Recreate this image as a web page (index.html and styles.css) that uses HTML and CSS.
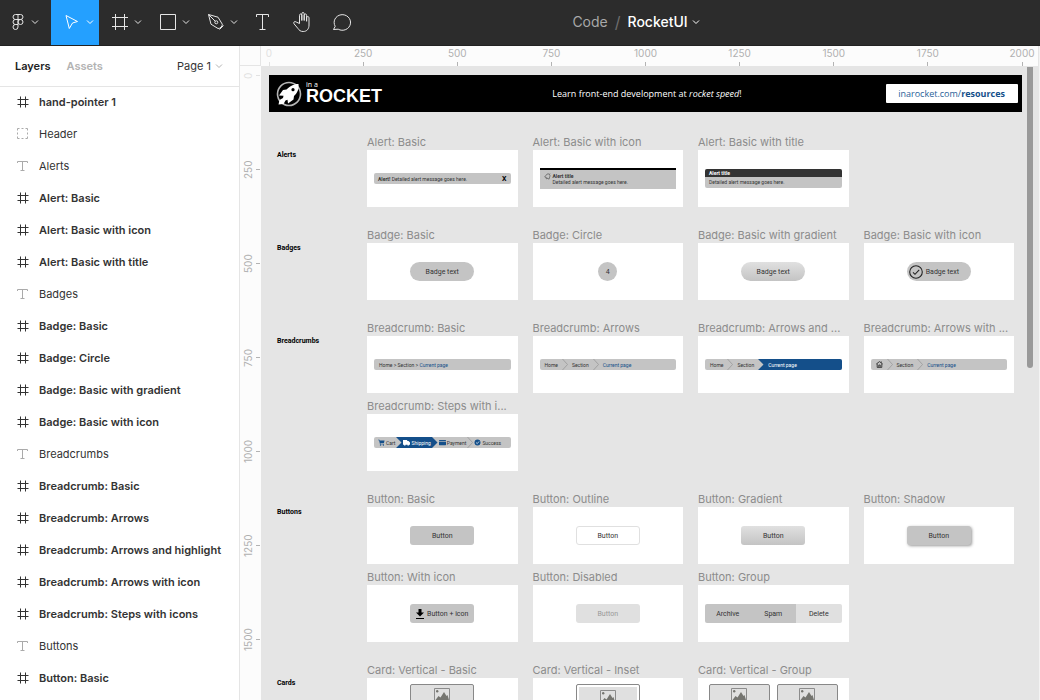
FILE: index.html
```html
<!DOCTYPE html>
<html lang="en">
<head>
<meta charset="utf-8">
<title>RocketUI</title>
<link rel="stylesheet" href="styles.css">
</head>
<body>
<svg class="sprite" aria-hidden="true">
  <symbol id="chev" viewBox="0 0 8 8"><path d="M1 2.5l3 3 3-3" fill="none" stroke="currentColor"/></symbol>
  <symbol id="hash" viewBox="0 0 12 12"><path d="M3.5.5v11M8.5.5v11M.5 3.5h11M.5 8.5h11" fill="none" stroke="currentColor"/></symbol>
  <symbol id="tee" viewBox="0 0 12 12"><path d="M.5 3V1.5h10V3M5.5 1.5v9M3.5 10.5h4" fill="none" stroke="currentColor"/></symbol>
  <symbol id="group" viewBox="0 0 12 12"><path d="M.5 2.500V.5h2M4.500.5h2M8.500.5h2v2M10.500 4.500v2M10.500 8.500v2h-2M6.500 10.500h-2M2.500 10.500h-2v-2M.5 6.500v-2" fill="none" stroke="currentColor"/></symbol>
  <symbol id="sep" viewBox="0 0 6 11"><path d="M.5 0l5 5.500-5 5.500" fill="none" stroke="#999" stroke-width=".8"/></symbol>
  <symbol id="notch" viewBox="0 0 6 11"><path d="M0 0h6v11H0l5.500-5.500z" fill="#144f8a"/></symbol>
  <symbol id="point" viewBox="0 0 6 11"><path d="M0 0l5.500 5.500L0 11z" fill="#144f8a"/></symbol>
  <symbol id="photo" viewBox="0 0 16 14"><path d="M.5.5h15v13H.5z" fill="none" stroke="#8c8c8c"/><circle cx="3.200" cy="3.200" r="1.200" fill="#757570"/><path d="M1.500 12l3-4 2 1.500 3.500-5.500 2.500 4 1-1 1.500 5z" fill="#757570"/></symbol>
</svg>

<header class="toolbar">
  <nav class="tools" aria-label="Tools">
    <button class="tool tool-menu" aria-label="Menu"><svg class="ico" viewBox="0 0 24 24"><path d="M12 4.500H9.500a2.500 2.500 0 0 0 0 5H12zM12 4.500h2.500a2.500 2.500 0 0 1 0 5H12M12 9.500H9.500a2.500 2.500 0 0 0 0 5H12zM12 14.500H9.500A2.500 2.500 0 1 0 12 17zM17 12a2.500 2.500 0 1 1-5 0 2.500 2.500 0 0 1 5 0z"/></svg><svg class="chev"><use href="#chev"/></svg></button>
    <button class="tool active" aria-label="Move"><svg class="ico" viewBox="0 0 24 24"><path d="M6 5.500l11.500 6-5 1.500-3.200 5.500z"/></svg><svg class="chev"><use href="#chev"/></svg></button>
    <button class="tool" aria-label="Frame"><svg class="ico" viewBox="0 0 24 24"><path d="M7.500 4v16M16.500 4v16M4 7.500h16M4 16.500h16"/></svg><svg class="chev"><use href="#chev"/></svg></button>
    <button class="tool" aria-label="Shape"><svg class="ico" viewBox="0 0 24 24"><path d="M4.500 4.500h15v15h-15z"/></svg><svg class="chev"><use href="#chev"/></svg></button>
    <button class="tool" aria-label="Pen"><svg class="ico" viewBox="0 0 24 24"><path d="M4.500 4.500l9.500 2.700 4.300 7-.3 1.800-2.200 2.200-1.800.3-7-4.300zM4.500 4.500l6.800 6.800M19.500 15.500l-4 4"/><circle cx="12.300" cy="12.300" r="1.500"/></svg><svg class="chev"><use href="#chev"/></svg></button>
    <button class="tool tool-single" aria-label="Text"><svg class="ico" viewBox="0 0 24 24"><path d="M5.500 7V4.500h12V7M11.500 4.500v15M8.500 19.500h6"/></svg></button>
    <button class="tool tool-single" aria-label="Hand"><svg class="ico" viewBox="0 0 24 24"><path d="M8.500 13.500V5.300c0-1.800 2.300-1.800 2.300 0v5.200-6.700c0-1.800 2.400-1.800 2.400 0v6.700-5.200c0-1.800 2.400-1.800 2.400 0v6-3.500c0-1.700 2.400-1.700 2.400 0V15c0 3.800-2 6.500-5.800 6.500-2.800 0-4-1.200-5.400-3.200L3 13.800c-1-1.600.8-3 2.200-1.800z"/></svg></button>
    <button class="tool tool-single" aria-label="Comment"><svg class="ico" viewBox="0 0 24 24"><path d="M2.500 19.500l1.700-3.200A8.200 7.800 0 1 1 7.200 19.200z"/></svg></button>
  </nav>
  <div class="title"><span class="project">Code</span><span class="slash">/</span><button class="file">RocketUI<svg class="chev"><use href="#chev"/></svg></button></div>
</header>

<div class="workspace">
  <aside class="sidebar">
    <div class="tabs">
      <button class="tab current">Layers</button>
      <button class="tab">Assets</button>
      <button class="page">Page 1<svg class="chev"><use href="#chev"/></svg></button>
    </div>
    <ul class="layers">
      <li class="frame"><svg><use href="#hash"/></svg>hand-pointer 1</li>
      <li><svg><use href="#group"/></svg>Header</li>
      <li><svg><use href="#tee"/></svg>Alerts</li>
      <li class="frame"><svg><use href="#hash"/></svg>Alert: Basic</li>
      <li class="frame"><svg><use href="#hash"/></svg>Alert: Basic with icon</li>
      <li class="frame"><svg><use href="#hash"/></svg>Alert: Basic with title</li>
      <li><svg><use href="#tee"/></svg>Badges</li>
      <li class="frame"><svg><use href="#hash"/></svg>Badge: Basic</li>
      <li class="frame"><svg><use href="#hash"/></svg>Badge: Circle</li>
      <li class="frame"><svg><use href="#hash"/></svg>Badge: Basic with gradient</li>
      <li class="frame"><svg><use href="#hash"/></svg>Badge: Basic with icon</li>
      <li><svg><use href="#tee"/></svg>Breadcrumbs</li>
      <li class="frame"><svg><use href="#hash"/></svg>Breadcrumb: Basic</li>
      <li class="frame"><svg><use href="#hash"/></svg>Breadcrumb: Arrows</li>
      <li class="frame"><svg><use href="#hash"/></svg>Breadcrumb: Arrows and highlight</li>
      <li class="frame"><svg><use href="#hash"/></svg>Breadcrumb: Arrows with icon</li>
      <li class="frame"><svg><use href="#hash"/></svg>Breadcrumb: Steps with icons</li>
      <li><svg><use href="#tee"/></svg>Buttons</li>
      <li class="frame"><svg><use href="#hash"/></svg>Button: Basic</li>
    </ul>
  </aside>

  <main class="canvas">
    <div class="corner"></div>
    <div class="ruler-x"><span class="faint">0</span><span>250</span><span>500</span><span>750</span><span>1000</span><span>1250</span><span>1500</span><span>1750</span><span>2000</span></div>
    <div class="ruler-y"><span class="faint">0</span><span>250</span><span>500</span><span>750</span><span>1000</span><span>1250</span><span>1500</span></div>

    <div class="scene">
      <div class="banner">
        <div class="logo">
          <svg class="rocket" viewBox="0 0 26 26"><circle cx="13" cy="13" r="11.500" fill="none" stroke="#b5b5b5" stroke-width="1.600"/><path d="M22.500 3C17 3 13.500 5.500 10.500 8.500L7 9l-4 5.500 4.500.3L7 17l-3.500 2L2.500 23.500l5-.5 2-3.500 2-.8.500 3.800 5.500-4 .5-3.500C21.500 11.500 23 8.500 22.500 3z" fill="#fff"/><circle cx="17" cy="8.700" r="1.600" fill="#000"/></svg>
          <div class="wordmark"><small>in a</small><strong>ROCKET</strong></div>
        </div>
        <p class="slogan">Learn front-end development at <em>rocket speed</em>!</p>
        <a class="resources" href="#resources">inarocket.com/<b>resources</b></a>
      </div>

      <section>
        <h2>Alerts</h2>
        <div class="frames">
          <figure><figcaption>Alert: Basic</figcaption><div class="art"><div class="bar alert"><span><b>Alert!</b> Detailed alert message goes here.</span><button class="close">X</button></div></div></figure>
          <figure><figcaption>Alert: Basic with icon</figcaption><div class="art"><div class="alert-icon"><svg viewBox="0 0 8 8"><path d="M.8 4.500L3.500 1.200c2-1 4 .8 3.200 2.600L5.800 7zM2.500 5.500c-.3 1 .6 1.500 1.300.8M6 1.500l.8-.8" fill="none" stroke="#333" stroke-width=".6"/></svg><p><b>Alert title</b><br>Detailed alert message goes here.</p></div></div></figure>
          <figure><figcaption>Alert: Basic with title</figcaption><div class="art"><div class="alert-title"><b>Alert title</b><p>Detailed alert message goes here.</p></div></div></figure>
        </div>
      </section>

      <section>
        <h2>Badges</h2>
        <div class="frames">
          <figure><figcaption>Badge: Basic</figcaption><div class="art"><span class="pill badge">Badge text</span></div></figure>
          <figure><figcaption>Badge: Circle</figcaption><div class="art"><span class="badge round">4</span></div></figure>
          <figure><figcaption>Badge: Basic with gradient</figcaption><div class="art"><span class="pill badge gradient">Badge text</span></div></figure>
          <figure><figcaption>Badge: Basic with icon</figcaption><div class="art"><span class="pill badge with-icon"><svg viewBox="0 0 14 14"><circle cx="7" cy="7" r="6.300" fill="none" stroke="#222" stroke-width="1.100"/><path d="M4 7.300l2 2 4.200-4.500" fill="none" stroke="#222" stroke-width="1.100"/></svg>Badge text</span></div></figure>
        </div>
      </section>

      <section>
        <h2>Breadcrumbs</h2>
        <div class="frames">
          <figure><figcaption>Breadcrumb: Basic</figcaption><div class="art"><nav class="bar crumbs"><span><a href="#h">Home</a> &gt; <a href="#s">Section</a> &gt; <a class="here" href="#c">Current page</a></span></nav></div></figure>
          <figure><figcaption>Breadcrumb: Arrows</figcaption><div class="art"><nav class="bar crumbs arrows"><a href="#h">Home</a><svg class="sep"><use href="#sep"/></svg><a href="#s">Section</a><svg class="sep"><use href="#sep"/></svg><a class="here" href="#c">Current page</a></nav></div></figure>
          <figure><figcaption>Breadcrumb: Arrows and ...</figcaption><div class="art"><nav class="bar crumbs arrows"><a href="#h">Home</a><svg class="sep"><use href="#sep"/></svg><a href="#s">Section</a><svg class="sep notch"><use href="#notch"/></svg><a class="lit" href="#c">Current page</a></nav></div></figure>
          <figure><figcaption>Breadcrumb: Arrows with ...</figcaption><div class="art"><nav class="bar crumbs arrows"><a href="#h" aria-label="Home"><svg class="house" viewBox="0 0 7 7"><path d="M.3 3L3.500.6 6.700 3M1.200 2.600v3.800h4.600V2.600M2.800 6V4h1.400v2M5.300.5v1.200" fill="none" stroke="#222" stroke-width=".8"/></svg></a><svg class="sep"><use href="#sep"/></svg><a href="#s">Section</a><svg class="sep"><use href="#sep"/></svg><a class="here" href="#c">Current page</a></nav></div></figure>
          <figure><figcaption>Breadcrumb: Steps with i...</figcaption><div class="art"><nav class="bar steps">
            <a href="#cart"><svg viewBox="0 0 8 8"><path d="M0 .8h1.700l.3 1h5.500L6.800 4.700H2.700l.2.700h3.800v.6H2.300L1.200 1.500H0z" fill="#144f8a"/><circle cx="2.900" cy="6.800" r=".8" fill="#144f8a"/><circle cx="6.200" cy="6.800" r=".8" fill="#144f8a"/></svg>Cart</a><svg class="sep"><use href="#notch"/></svg><a class="lit" href="#ship"><svg viewBox="0 0 8 8"><path d="M0 1h4.800v1.300h1.500L8 4v2.500H0z" fill="#fff"/><circle cx="2" cy="6.500" r="1" fill="#fff"/><circle cx="6" cy="6.500" r="1" fill="#fff"/></svg>Shipping</a><svg class="sep"><use href="#point"/></svg><a href="#pay"><svg viewBox="0 0 8 8"><rect y="1" width="8" height="6" rx=".6" fill="#144f8a"/><path d="M0 2.800h8" stroke="#c4c4c4" stroke-width=".8"/></svg>Payment</a><svg class="sep"><use href="#sep"/></svg><a href="#done"><svg viewBox="0 0 8 8"><circle cx="4" cy="4" r="3.400" fill="#144f8a"/><path d="M2.400 4l1.300 1.300 2.100-2.500" fill="none" stroke="#fff" stroke-width=".8"/></svg>Success</a>
          </nav></div></figure>
        </div>
      </section>

      <section>
        <h2>Buttons</h2>
        <div class="frames">
          <figure><figcaption>Button: Basic</figcaption><div class="art"><button class="pill btn">Button</button></div></figure>
          <figure><figcaption>Button: Outline</figcaption><div class="art"><button class="pill btn outline">Button</button></div></figure>
          <figure><figcaption>Button: Gradient</figcaption><div class="art"><button class="pill btn gradient">Button</button></div></figure>
          <figure><figcaption>Button: Shadow</figcaption><div class="art"><button class="pill btn shadow">Button</button></div></figure>
          <figure><figcaption>Button: With icon</figcaption><div class="art"><button class="pill btn download"><svg viewBox="0 0 8 10"><path d="M2.500 0h3v3.500H8L4 7.500 0 3.500h2.500zM0 9h8v1H0z" fill="#000"/></svg>Button + icon</button></div></figure>
          <figure><figcaption>Button: Disabled</figcaption><div class="art"><button class="pill btn" disabled>Button</button></div></figure>
          <figure><figcaption>Button: Group</figcaption><div class="art"><div class="btn-group"><button>Archive</button><button>Spam</button><button class="pale">Delete</button></div></div></figure>
        </div>
      </section>

      <section>
        <h2>Cards</h2>
        <div class="frames">
          <figure><figcaption>Card: Vertical - Basic</figcaption><div class="art cards"><div class="card"><svg><use href="#photo"/></svg></div></div></figure>
          <figure><figcaption>Card: Vertical - Inset</figcaption><div class="art cards"><div class="card inset"><svg><use href="#photo"/></svg></div></div></figure>
          <figure><figcaption>Card: Vertical - Group</figcaption><div class="art cards"><div class="card"><svg><use href="#photo"/></svg></div><div class="card"><svg><use href="#photo"/></svg></div></div></figure>
        </div>
      </section>
      <div class="thumb"></div>
    </div>
  </main>
  <aside class="inspector"></aside>
</div>
</body>
</html>
```

FILE: styles.css
```css
* { box-sizing: border-box; }
body {
  margin: 0;
  height: 100vh;
  display: flex;
  flex-direction: column;
  overflow: hidden;
  font-family: Inter, "Liberation Sans", sans-serif;
  font-size: 11px;
  color: #333;
  background: #fff;
}
button { border: 0; padding: 0; background: none; font: inherit; color: inherit; }
a { color: inherit; text-decoration: none; }
p, h2, figure, ul { margin: 0; padding: 0; }
.sprite { position: absolute; width: 0; height: 0; }
.chev { width: 8px; height: 8px; flex: none; }

/* Toolbar */
.toolbar {
  position: relative;
  display: flex;
  flex: none;
  height: 46px;
  background: #2c2c2c;
  border-bottom: 1px solid #222;
  color: #e6e6e6;
}
.tools { display: flex; }
.tool { display: flex; align-items: center; gap: 2px; width: 48px; padding: 0 0 2px 9px; }
.tool-menu { width: 51px; padding-left: 6px; gap: 1px; }
.tool-single { width: 40px; padding-left: 8px; }
.tool.active { background: #24a0ff; color: #fff; }
.ico { width: 24px; height: 24px; fill: none; stroke: currentColor; }
.title {
  position: absolute;
  inset: 0 0 2px 232px;
  display: flex;
  align-items: center;
  justify-content: center;
  gap: 7px;
  font-size: 14px;
  pointer-events: none;
}
.project { color: #a8a8a8; }
.slash { color: #6e6e6e; font-size: 16px; }
.file { display: flex; align-items: center; gap: 4px; color: #fff; font-weight: 500; }

.workspace { display: flex; flex: 1; min-height: 0; }

/* Layers panel */
.sidebar { flex: none; width: 240px; border-right: 1px solid #e5e5e5; overflow: hidden; }
.tabs { display: flex; align-items: center; gap: 16px; height: 41px; padding: 0 16px 0 15px; border-bottom: 1px solid #e5e5e5; }
.tab { font-weight: 600; color: #b3b3b3; }
.tab.current { color: #222; }
.page { display: flex; align-items: center; gap: 4px; margin-left: auto; }
.page .chev { color: #b3b3b3; }
.layers { list-style: none; }
.layers li { display: flex; align-items: center; gap: 10px; height: 32px; padding: 0 0 3px 17px; white-space: nowrap; }
.layers svg { width: 12px; height: 12px; color: #aaa; }
.layers .frame { font-weight: 600; }
.layers .frame svg { color: #333; }

/* Canvas and rulers */
.canvas { flex: 1; min-width: 0; display: grid; grid-template: 20px 1fr / 21px 1fr; }
.corner { background: #fcfcfc; border-right: 1px solid #e5e5e5; border-bottom: 1px solid #e5e5e5; }
.ruler-x, .ruler-y { display: flex; font-size: 10px; line-height: 12px; color: #b0b0b0; background: #fcfcfc; }
.ruler-x { justify-content: space-between; padding: 1px 16px 0 8px; border-right: 1px solid #e5e5e5; }
.ruler-x span { display: flex; flex-direction: column; justify-content: space-between; align-items: center; width: 0; }
.ruler-x span::after { content: ""; width: 1px; height: 4px; background: #b3b3b3; }
.ruler-y { flex-direction: column; gap: 94px; padding: 10px 0 0 2px; min-height: 0; overflow: hidden; }
.ruler-y span { display: flex; flex: none; flex-direction: column; align-items: center; justify-content: space-between; height: 0; width: 18px; writing-mode: vertical-rl; transform: rotate(180deg); }
.ruler-y span::after { content: ""; width: 4px; height: 1px; background: #b3b3b3; }
.ruler-x .faint, .ruler-y .faint { opacity: .35; }
.scene { position: relative; min-height: 0; overflow: hidden; padding: 9px 17px 0 8px; background: #e5e5e5; font-family: Roboto, "Liberation Sans", sans-serif; }
.thumb { position: absolute; top: 1px; right: 6px; width: 6px; height: 301px; border-radius: 0 0 3px 3px; background: #999; }
.inspector { flex: none; width: 1px; background: #f3f3f3; }

/* Banner */
.banner { display: grid; grid-template-columns: 1fr auto 1fr; align-items: center; height: 37px; margin-bottom: 22px; padding: 0 4px 0 7px; background: #000; color: #fff; font: 9px "Open Sans", sans-serif; }
.logo { display: flex; align-items: center; gap: 4px; }
.rocket { width: 26px; height: 26px; }
.wordmark { display: flex; flex-direction: column; padding-bottom: 2px; font-family: "Liberation Sans", sans-serif; }
.wordmark small { font: 7px/6px "Open Sans", sans-serif; }
.wordmark strong { font-size: 18px; line-height: 16px; }
.resources { justify-self: end; display: flex; align-items: center; height: 19px; padding: 0 13px 0 12px; border-radius: 1px; background: #fff; color: #2a5f98; }
.resources b { color: #144f8a; }

/* Component sheet */
section { display: grid; grid-template-columns: 90px 1fr; margin-bottom: 20px; padding: 0 8px; }
h2 { font-size: 7px; line-height: 8px; color: #000; padding-top: 17px; }
.frames { display: grid; grid-template-columns: repeat(4, minmax(0, 1fr)); gap: 5px 15px; }
figcaption { height: 16px; white-space: nowrap; font: 11px/16px Inter, sans-serif; color: #8c8c8c; }
.art { display: flex; align-items: center; justify-content: center; height: 57px; padding: 0 7px; background: #fff; font-size: 5px; line-height: 6px; white-space: nowrap; }

.bar { display: flex; align-items: center; width: 100%; height: 11px; border-radius: 2px; background: #c4c4c4; overflow: hidden; }
.alert { justify-content: space-between; padding: 0 4px; }
.close { font-size: 7px; font-weight: 700; color: #000; }
.alert-icon { display: flex; gap: 2px; width: 100%; height: 21px; padding: 3px 4px 0; border-top: 2px solid #000; background: #c4c4c4; }
.alert-icon svg { width: 7px; height: 7px; }
.alert-title { width: 100%; border-radius: 2px; overflow: hidden; background: #c4c4c4; }
.alert-title b { display: block; padding: 1px 4px; background: #333; color: #fff; }
.alert-title p { padding: 2px 4px 3px; }

.pill { display: flex; align-items: center; justify-content: center; width: 64px; height: 19px; background: #c4c4c4; }
.badge { border-radius: 10px; font-size: 7px; background: #c4c4c4; }
.round { display: flex; align-items: center; justify-content: center; width: 19px; height: 19px; }
.gradient { background: linear-gradient(#e0e0e0, #c4c4c4); }
.with-icon { justify-content: flex-start; gap: 3px; padding-left: 2px; }
.with-icon svg { width: 14px; height: 14px; }

.crumbs { padding-left: 5px; }
.here { color: #144f8a; }
.sep { flex: none; width: 6px; height: 11px; }
.arrows { gap: 4px; }
.lit { display: flex; align-items: center; height: 11px; background: #144f8a; color: #fff; }
.notch { margin-right: -4px; }
.arrows .lit { flex: 1; padding-left: 4px; }
.steps { gap: 1px; padding: 0 4px; }
.steps a { display: flex; align-items: center; gap: 1px; }
.steps a svg { width: 7px; height: 7px; }
.steps .lit { margin: 0 -1px; padding: 0 1px; }
.house { display: block; width: 7px; height: 7px; }

.btn { border-radius: 3px; font-size: 7px; }
.outline { border: 1px solid #e0e0e0; background: #fff; }
.shadow { box-shadow: 1px 1px 3px #999; }
.download { gap: 3px; }
.download svg { width: 8px; height: 10px; }
.btn:disabled { background: #e0e0e0; color: #999; }
.btn-group { display: grid; grid-template-columns: repeat(3, 1fr); width: 100%; border-radius: 2px; overflow: hidden; font-size: 7px; }
.btn-group button { height: 19px; background: #c4c4c4; }
.btn-group .pale { background: #e0e0e0; }

.cards { align-items: flex-start; gap: 7px; padding: 6px 11px 0; overflow: hidden; }
.card { flex: 0 1 64px; height: 60px; padding-top: 3px; text-align: center; border: 1px solid #888; border-radius: 2px; background: #e0e0e0; }
.card svg { width: 16px; height: 14px; }
.inset { padding-top: 5px; box-shadow: inset 0 0 0 2px #fff; }
```
